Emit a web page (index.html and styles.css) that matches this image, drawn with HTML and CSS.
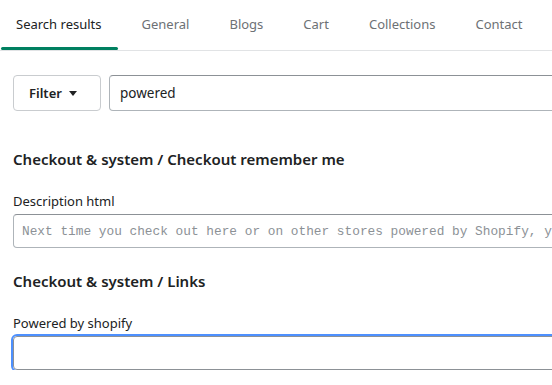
FILE: index.html
```html
<!DOCTYPE html>
<html lang="en">
<head>
    <meta charset="UTF-8">
    <meta name="viewport" content="width=device-width, initial-scale=1.0">
    <title>Translations</title>
    <link rel="stylesheet" href="styles.css">
</head>
<body>
    <div class="page">
        <nav class="tabs">
            <a class="tab active" href="#">Search results</a>
            <a class="tab" href="#">General</a>
            <a class="tab" href="#">Blogs</a>
            <a class="tab" href="#">Cart</a>
            <a class="tab" href="#">Collections</a>
            <a class="tab" href="#">Contact</a>
        </nav>

        <div class="content">
            <div class="search-row">
                <button class="filter-btn" type="button">Filter <span class="caret"></span></button>
                <input class="search-input" type="text" value="powered">
            </div>

            <div class="section">
                <h2>Checkout &amp; system / Checkout remember me</h2>
                <label for="desc_html">Description html</label>
                <input class="field mono" type="text" id="desc_html" placeholder="Next time you check out here or on other stores powered by Shopify, you'll be able to skip this step">
            </div>

            <div class="section">
                <h2>Checkout &amp; system / Links</h2>
                <label for="powered_by">Powered by shopify</label>
                <input class="field focused" type="text" id="powered_by">
            </div>
        </div>
    </div>
</body>
</html>
```

FILE: styles.css
```css
html, body {
    margin: 0;
    background-color: #fff;
    overflow: hidden;
}
body {
    font-family: "Noto Sans", "Open Sans", sans-serif;
    color: #202223;
}
.page {
    width: 760px;
}
.tabs {
    display: flex;
    gap: 8px;
    height: 50px;
    border-bottom: 1px solid #e1e3e5;
}
.tab {
    position: relative;
    display: flex;
    align-items: center;
    padding: 0 16px 2px;
    font-size: 13px;
    color: #6d7175;
    text-decoration: none;
}
.tab.active {
    color: #202223;
}
.tab.active::after {
    content: "";
    position: absolute;
    left: 1px;
    right: 0;
    bottom: 0;
    height: 3px;
    border-radius: 2px;
    background-color: #008060;
}
.content {
    padding: 24px 0 0 13px;
}
.search-row {
    display: flex;
    gap: 8px;
}
.filter-btn {
    display: flex;
    align-items: center;
    gap: 7px;
    width: 88px;
    height: 36px;
    padding: 0 0 0 15px;
    border: 1px solid #c9cccf;
    border-radius: 4px;
    background-color: #fff;
    font-family: inherit;
    font-size: 13px;
    font-weight: 600;
    color: #202223;
}
.caret {
    width: 0;
    height: 0;
    border-left: 4.5px solid transparent;
    border-right: 4.5px solid transparent;
    border-top: 5px solid #202223;
    margin-top: 1px;
}
.search-input {
    flex: 1;
    height: 36px;
    box-sizing: border-box;
    padding: 0 10px;
    border: 1px solid #aeb4b9;
    border-top-color: #8c9196;
    border-radius: 4px;
    font-family: inherit;
    font-size: 13.5px;
    color: #202223;
}
.section {
    margin-top: 38px;
}
.section + .section {
    margin-top: 23px;
}
h2 {
    margin: 0 0 22px;
    font-size: 15px;
    line-height: 20px;
    font-weight: 600;
}
label {
    display: block;
    margin-bottom: 3px;
    font-size: 13px;
    line-height: 20px;
}
.field {
    display: block;
    width: 100%;
    height: 34px;
    box-sizing: border-box;
    padding: 0 8px;
    border: 1px solid #aeb4b9;
    border-top-color: #8c9196;
    border-radius: 4px;
    font-family: inherit;
    font-size: 14px;
    outline: none;
}
.field.mono {
    font-family: "Liberation Mono", monospace;
    font-size: 12.8px;
}
.field.mono::placeholder {
    color: #8c9196;
}
.field.focused {
    outline: 2px solid #4d90fe;
    outline-offset: 0;
    border-color: #8c9196;
}
```
